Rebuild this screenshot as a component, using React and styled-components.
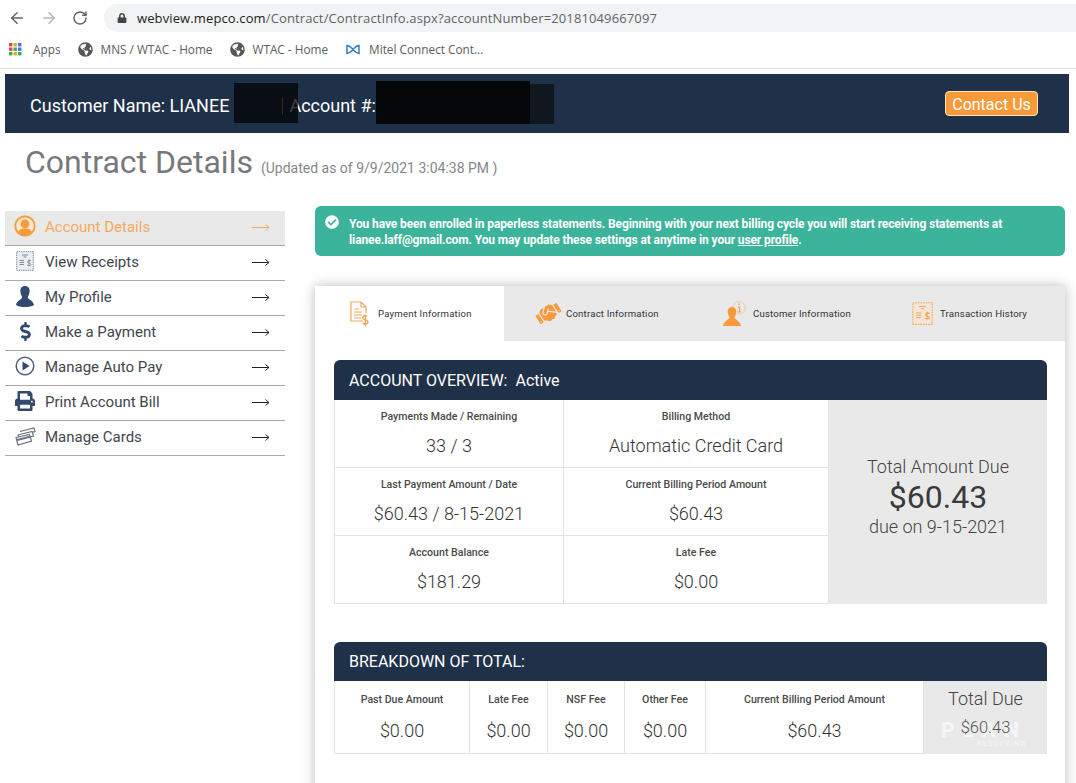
import React from "react";
import styled, { createGlobalStyle } from "styled-components";
import { ArrowLeft, ArrowRight, RotateCw } from "lucide-react";
import { FaGlobeAmericas, FaLock, FaCheckCircle, FaHandshake, FaPrint, FaDollarSign } from "react-icons/fa";

const NAVY = "#1f3049";
const ORANGE = "#f79a3a";
const GREY = "#e9e9e9";
const LINE = "#e3e3e3";

const GlobalStyle = createGlobalStyle`
  html, body {
    margin: 0;
    height: 783px;
    overflow: hidden;
    background: #fff;
    font-family: Roboto, "Liberation Sans", sans-serif;
  }
`;

const TopBar = styled.div`
  height: 36px;
  display: flex;
  align-items: center;
  padding: 0 0 0 8px;
  box-sizing: border-box;
`;

const NavButton = styled.div`
  width: ${props => props.width || "32px"};
  display: flex;
  color: ${props => props.color || "#5f6368"};
`;

const UrlBar = styled.div`
  flex: 1;
  height: 28px;
  margin-left: 6px;
  padding-left: 13px;
  display: flex;
  align-items: center;
  gap: 10px;
  background: #f1f3f4;
  border-radius: 14px 0 0 14px;
  font-family: "Open Sans", sans-serif;
  font-size: 13px;
  letter-spacing: 0.12px;
  color: #5f6368;
`;

const UrlHost = styled.span`
  color: #222;
`;

const BookmarkBar = styled.div`
  height: 33px;
  display: flex;
  align-items: center;
  padding: 0 0 6px 9px;
  box-sizing: border-box;
  border-bottom: 1px solid #e0e0e0;
  font-family: "Open Sans", sans-serif;
  font-size: 11.8px;
  color: #5c5c5c;
`;

const Bookmark = styled.div`
  display: flex;
  align-items: center;
  gap: ${props => props.gap || "8px"};
  margin-right: ${props => props.marginRight || "17px"};
  white-space: nowrap;
`;

const HeaderBar = styled.div`
  position: relative;
  height: 59px;
  width: 1064px;
  margin: 5px 0 0 5px;
  padding: 0 31px 0 25px;
  box-sizing: border-box;
  display: flex;
  align-items: center;
  justify-content: space-between;
  background: ${NAVY};
  color: #fff;
  font-size: 18px;
`;

const CustomerLine = styled.div`
  display: flex;
  align-items: center;
  padding-top: 4px;
  white-space: pre;
`;

const NameDivider = styled.span`
  width: 1px;
  height: 18px;
  margin: 0 6px 0 53px;
  background: ${ORANGE};
`;

const Redaction = styled.div`
  position: absolute;
  top: ${props => props.top};
  left: ${props => props.left};
  width: ${props => props.width};
  height: ${props => props.height};
  background: ${props => props.background || "#060708"};
`;

const ContactButton = styled.div`
  height: 25px;
  width: 93px;
  display: flex;
  align-items: center;
  justify-content: center;
  padding-top: 1px;
  background: ${ORANGE};
  border: 1px solid #fbe3c6;
  border-radius: 4px;
  box-sizing: border-box;
  font-size: 16px;
  color: #fff;
`;

const TitleRow = styled.div`
  height: 73px;
  padding: 10px 0 0 25px;
  box-sizing: border-box;
  display: flex;
  align-items: baseline;
  gap: 8px;
`;

const Title = styled.h1`
  margin: 0;
  font-size: 32px;
  line-height: 38px;
  font-weight: 400;
  color: #77797c;
`;

const Updated = styled.span`
  font-size: 14px;
  color: #85878a;
`;

const Columns = styled.div`
  display: flex;
  align-items: flex-start;
  padding-left: 5px;
`;

const Sidebar = styled.nav`
  width: 280px;
  flex-shrink: 0;
  margin-top: 5px;
`;

const SideItem = styled.div`
  height: 35px;
  box-sizing: border-box;
  display: flex;
  align-items: center;
  padding: 0 15px 2px 0;
  border-bottom: 1px solid #aaa;
  background: ${props => (props.$active ? GREY : "#fff")};
  color: ${props => (props.$active ? "#f2a95c" : "#3f4650")};
  font-size: 15px;
`;

const SideIcon = styled.div`
  width: 40px;
  display: flex;
  justify-content: center;
  padding-bottom: 2px;
  color: #33496f;
`;

const SideLabel = styled.div`
  flex: 1;
`;

const Main = styled.main`
  width: 750px;
  margin-left: 30px;
`;

const Alert = styled.div`
  height: 50px;
  box-sizing: border-box;
  padding: 10px 12px 0 34px;
  position: relative;
  background: #3cb39b;
  border-radius: 6px;
  color: #fff;
  font-size: 12px;
  font-weight: 700;
  line-height: 16px;
  letter-spacing: -0.11px;
`;

const AlertIcon = styled.div`
  position: absolute;
  left: 10px;
  top: 9px;
  display: flex;
`;

const AlertLink = styled.span`
  text-decoration: underline;
`;

const Card = styled.section`
  margin-top: 30px;
  height: 520px;
  background: #fff;
  box-shadow: 0 0 12px rgba(0, 0, 0, 0.28);
`;

const Tabs = styled.div`
  display: flex;
  height: 55px;
  background: ${GREY};
`;

const Tab = styled.div`
  width: ${props => props.width || "187px"};
  flex-shrink: 0;
  display: flex;
  align-items: center;
  padding-left: ${props => props.paddingLeft || "34px"};
  gap: ${props => props.gap || "6px"};
  box-sizing: border-box;
  background: ${props => (props.$active ? "#fff" : "transparent")};
  font-size: 9.6px;
  letter-spacing: 0.2px;
  color: #333;
  white-space: nowrap;
`;

const TiltedHandshake = styled(FaHandshake)`
  transform: rotate(-32deg);
`;

const CardBody = styled.div`
  padding: 19px 18px 0 19px;
`;

const Panel = styled.div`
  position: relative;
  margin-bottom: 38px;
`;

const PanelHeader = styled.div`
  height: ${props => props.height || "40px"};
  padding-left: 15px;
  display: flex;
  align-items: center;
  gap: 8px;
  background: ${NAVY};
  border-radius: 6px 6px 0 0;
  color: #fff;
  font-size: 16px;
`;

const OverviewGrid = styled.div`
  display: grid;
  grid-template-columns: 230px 265px 218px;
  grid-template-rows: repeat(3, 68px);
`;

const BreakdownGrid = styled.div`
  display: grid;
  grid-template-columns: 136px 78px 77px 81px 218px 123px;
  height: 73px;
`;

const Cell = styled.div`
  box-sizing: border-box;
  display: flex;
  flex-direction: column;
  align-items: center;
  padding-top: ${props => props.paddingTop || "10px"};
  background: #fff;
  border-right: 1px solid ${LINE};
  border-bottom: 1px solid ${LINE};
  border-left: ${props => (props.$first ? `1px solid ${LINE}` : "none")};
`;

const CellLabel = styled.div`
  font-size: 10.6px;
  line-height: 14px;
  font-weight: 500;
  color: #4a4a4a;
  white-space: nowrap;
`;

const CellValue = styled.div`
  margin-top: ${props => props.marginTop || "10px"};
  font-size: 18px;
  line-height: 24px;
  font-weight: 300;
  color: #333;
  white-space: nowrap;
`;

const TotalBox = styled.div`
  grid-column: 3;
  grid-row: 1 / span 3;
  display: flex;
  flex-direction: column;
  align-items: center;
  justify-content: center;
  padding-bottom: 10px;
  background: ${GREY};
  color: #444;
  font-size: 18px;
  font-weight: 300;
  line-height: 22px;
`;

const TotalAmount = styled.div`
  font-size: 32px;
  line-height: 38px;
  font-weight: 400;
  color: #3a3a3a;
`;

const BreakdownTotal = styled.div`
  position: relative;
  display: flex;
  flex-direction: column;
  align-items: center;
  padding-top: 7px;
  background: ${GREY};
  color: #444;
  font-size: 18px;
  line-height: 22px;
  font-weight: 300;
  overflow: hidden;
`;

const BreakdownAmount = styled.div`
  position: relative;
  z-index: 1;
  margin-top: 7px;
  font-size: 16.5px;
  color: #555;
`;

const Watermark = styled.div`
  position: absolute;
  left: 0;
  top: 39px;
  width: 103px;
  text-align: right;
  color: rgba(255, 255, 255, 0.6);
  font-size: 21px;
  font-weight: 700;
  line-height: 20px;
  letter-spacing: 8px;
`;

const WatermarkSub = styled.div`
  font-size: 7px;
  line-height: 9px;
  letter-spacing: 1.5px;
  font-weight: 400;
`;

const Dots = () => {
  const colors = ["#d8483b", "#e2a72e", "#3b78e7", "#d8483b", "#3aa757", "#3b78e7", "#3aa757", "#e2a72e", "#3aa757"];
  return (
    <svg width="13" height="13" viewBox="0 0 13 13">
      {colors.map((c, i) => (
        <rect key={i} x={(i % 3) * 4.5} y={Math.floor(i / 3) * 4.5} width="3.4" height="3.4" fill={c} />
      ))}
    </svg>
  );
};

const MitelLogo = () => (
  <svg width="14" height="11" viewBox="0 0 14 11" fill="none" stroke="#2f7fd0" strokeWidth="1.5">
    <path d="M1 1.5C4 1.5 5.5 4 7 5.5 8.5 7 10 9.5 13 9.5V1.5C10 1.5 8.5 4 7 5.5 5.5 7 4 9.5 1 9.5Z" />
  </svg>
);

const SideArrow = ({ color }) => (
  <svg width="18" height="9" viewBox="0 0 18 9" fill="none" stroke={color} strokeWidth="1">
    <path d="M0 4.5H17M13.5 1.5L17 4.5L13.5 7.5" />
  </svg>
);

const ProfileCircle = () => (
  <svg width="22" height="22" viewBox="0 0 22 22">
    <circle cx="11" cy="11" r="9.7" fill="#fbe7cf" stroke={ORANGE} strokeWidth="1.8" />
    <circle cx="11" cy="9" r="4.4" fill={ORANGE} />
    <path d="M4 18C5 14 8 13.5 11 13.5S17 14 18 18L11 21Z" fill={ORANGE} />
  </svg>
);

const ReceiptIcon = ({ color = "#6f7f92", bg = "#eceff2", w = 18, h = 20, tall }) => (
  <svg width={w} height={h} viewBox="0 0 18 20" fill={bg} stroke={color} strokeWidth="0.9">
    <rect x="0.7" y="0.7" width="16.6" height="18.6" strokeDasharray="1.4 0.8" />
    <path d="M6 4H12M7.5 6H10.5M3.5 9.5H8M3.5 11.5H8M3.5 13.5H8" fill="none" />
    <path d="M13 8.5V15M15 10C14 9 11.5 9.5 11.5 11C11.5 12.7 15 12 15 13.5C15 15 12 15 11 14" fill="none" strokeWidth={tall ? 1 : 0.8} />
  </svg>
);

const BustIcon = () => (
  <svg width="18" height="21" viewBox="0 0 18 21" fill="#33496f">
    <path d="M9 0C12.2 0 14 2.4 13.6 5.8C13.4 8 12.4 9.8 11.8 11.2C11.8 13.6 17.2 14 18 19C16 20.4 12.5 21 9 21S2 20.4 0 19C.8 14 6.2 13.6 6.2 11.2C5.6 9.8 4.6 8 4.4 5.8C4 2.4 5.8 0 9 0Z" />
  </svg>
);

const PlayCircle = () => (
  <svg width="20" height="20" viewBox="0 0 20 20">
    <circle cx="10" cy="10" r="8.8" fill="none" stroke="#4d6288" strokeWidth="1.5" />
    <path d="M7.5 5.5L14.5 10L7.5 14.5Z" fill="#33496f" />
  </svg>
);

const CardsIcon = () => (
  <svg width="21" height="19" viewBox="0 0 21 19" fill="none" stroke="#6a7480" strokeWidth="1.2">
    <path d="M5 4.5L19 1L20 4.5L7 8" />
    <path d="M3 8L17 4.5L18.5 9L5 12.5Z" fill="#fff" />
    <path d="M1 10.5L14.5 7.5L16.5 14L3 18Z" fill="#fff" />
    <path d="M2 13L15 9.8" strokeWidth="2" />
  </svg>
);

const InvoiceIcon = () => (
  <svg width="20" height="26" viewBox="0 0 20 26" fill="none" stroke="#f2a85b" strokeWidth="1.2">
    <path d="M13 20H1V1H11L16 6V12M11 1V6H16" />
    <path d="M4 8H9M4 11H12M4 14H12M4 17H11" />
    <path d="M17 15.5C15.5 14 12.5 14.5 12.5 16.7C12.5 19 18 18.5 18 21C18 23.5 14 23.5 12.5 22M15.3 13.5V25" strokeWidth="1.4" />
  </svg>
);

const CustomerIcon = () => (
  <svg width="23" height="26" viewBox="0 0 23 26">
    <circle cx="16" cy="7" r="6.3" fill="none" stroke="#f3c79b" strokeWidth="0.8" />
    <path d="M16 2.6V4M15 6H16.6V11M14.6 11H18" fill="none" stroke="#f2a05a" strokeWidth="1.2" />
    <path d="M9 6C12 6 13.6 8.3 13.2 11.5C13 13.5 12 15 11.5 16.5C11.5 18.5 17 19.5 18 25H0C1 19.5 6.5 18.5 6.5 16.5C6 15 5 13.5 4.8 11.5C4.4 8.3 6 6 9 6Z" fill={ORANGE} />
  </svg>
);

const sideItems = [
  { label: "Account Details", icon: <ProfileCircle />, active: true },
  { label: "View Receipts", icon: <ReceiptIcon /> },
  { label: "My Profile", icon: <BustIcon /> },
  { label: "Make a Payment", icon: <FaDollarSign size={19} /> },
  { label: "Manage Auto Pay", icon: <PlayCircle /> },
  { label: "Print Account Bill", icon: <FaPrint size={20} /> },
  { label: "Manage Cards", icon: <CardsIcon /> },
];

const overviewRows = [
  [
    { label: "Payments Made / Remaining", value: "33 / 3", first: true },
    { label: "Billing Method", value: "Automatic Credit Card" },
  ],
  [
    { label: "Last Payment Amount / Date", value: "$60.43 / 8-15-2021", first: true },
    { label: "Current Billing Period Amount", value: "$60.43" },
  ],
  [
    { label: "Account Balance", value: "$181.29", first: true },
    { label: "Late Fee", value: "$0.00" },
  ],
];

const breakdown = [
  { label: "Past Due Amount", value: "$0.00", first: true },
  { label: "Late Fee", value: "$0.00" },
  { label: "NSF Fee", value: "$0.00" },
  { label: "Other Fee", value: "$0.00" },
  { label: "Current Billing Period Amount", value: "$60.43" },
];

const App = () => (
  <>
    <GlobalStyle />
    <TopBar>
      <NavButton><ArrowLeft size={18} strokeWidth={2} /></NavButton>
      <NavButton color="#b4b7ba"><ArrowRight size={18} strokeWidth={2} /></NavButton>
      <NavButton width="26px"><RotateCw size={16} strokeWidth={2.2} /></NavButton>
      <UrlBar>
        <FaLock size={10} color="#444" />
        <span><UrlHost>webview.mepco.com</UrlHost>/Contract/ContractInfo.aspx?accountNumber=20181049667097</span>
      </UrlBar>
    </TopBar>
    <BookmarkBar>
      <Bookmark gap="11px"><Dots />Apps</Bookmark>
      <Bookmark><FaGlobeAmericas size={15} color="#555" />MNS / WTAC - Home</Bookmark>
      <Bookmark marginRight="18px"><FaGlobeAmericas size={15} color="#555" />WTAC - Home</Bookmark>
      <Bookmark gap="9px"><MitelLogo />Mitel Connect Cont...</Bookmark>
    </BookmarkBar>

    <HeaderBar>
      <CustomerLine>Customer Name: LIANEE<NameDivider />Account #:</CustomerLine>
      <ContactButton>Contact Us</ContactButton>
      <Redaction top="9px" left="229px" width="64px" height="40px" background="rgba(4, 5, 6, 0.78)" />
      <Redaction top="7px" left="371px" width="154px" height="43px" />
      <Redaction top="10px" left="525px" width="24px" height="40px" background="#11171f" />
    </HeaderBar>

    <TitleRow>
      <Title>Contract Details</Title>
      <Updated>(Updated as of 9/9/2021 3:04:38 PM )</Updated>
    </TitleRow>

    <Columns>
      <Sidebar>
        {sideItems.map(item => (
          <SideItem key={item.label} $active={item.active}>
            <SideIcon>{item.icon}</SideIcon>
            <SideLabel>{item.label}</SideLabel>
            <SideArrow color={item.active ? "#f2a95c" : "#222"} />
          </SideItem>
        ))}
      </Sidebar>

      <Main>
        <Alert>
          <AlertIcon><FaCheckCircle size={14} /></AlertIcon>
          You have been enrolled in paperless statements. Beginning with your next billing cycle you will start receiving statements at lianee.laff@gmail.com. You may update these settings at anytime in your <AlertLink>user profile</AlertLink>.
        </Alert>

        <Card>
          <Tabs>
            <Tab $active width="189px" paddingLeft="35px" gap="8px"><InvoiceIcon />Payment Information</Tab>
            <Tab paddingLeft="32px" gap="5px"><TiltedHandshake size={25} color={ORANGE} />Contract Information</Tab>
            <Tab paddingLeft="32px" gap="7px"><CustomerIcon />Customer Information</Tab>
            <Tab paddingLeft="34px" gap="7px"><ReceiptIcon color="#f2a85b" bg="#f3e6d8" w={21} h={25} tall />Transaction History</Tab>
          </Tabs>
          <CardBody>
            <Panel>
              <PanelHeader>ACCOUNT OVERVIEW: <span>Active</span></PanelHeader>
              <OverviewGrid>
                {overviewRows.flat().map(cell => (
                  <Cell key={cell.label} $first={cell.first}>
                    <CellLabel>{cell.label}</CellLabel>
                    <CellValue>{cell.value}</CellValue>
                  </Cell>
                ))}
                <TotalBox>
                  Total Amount Due
                  <TotalAmount>$60.43</TotalAmount>
                  due on 9-15-2021
                </TotalBox>
              </OverviewGrid>
            </Panel>

            <Panel>
              <PanelHeader height="39px">BREAKDOWN OF TOTAL:</PanelHeader>
              <BreakdownGrid>
                {breakdown.map(cell => (
                  <Cell key={cell.label} $first={cell.first} paddingTop="12px">
                    <CellLabel>{cell.label}</CellLabel>
                    <CellValue marginTop="12px">{cell.value}</CellValue>
                  </Cell>
                ))}
                <BreakdownTotal>
                  Total Due
                  <BreakdownAmount>$60.43</BreakdownAmount>
                  <Watermark>
                    PLAN
                    <WatermarkSub>RESOLVING</WatermarkSub>
                  </Watermark>
                </BreakdownTotal>
              </BreakdownGrid>
            </Panel>
          </CardBody>
        </Card>
      </Main>
    </Columns>
  </>
);

export default App;
